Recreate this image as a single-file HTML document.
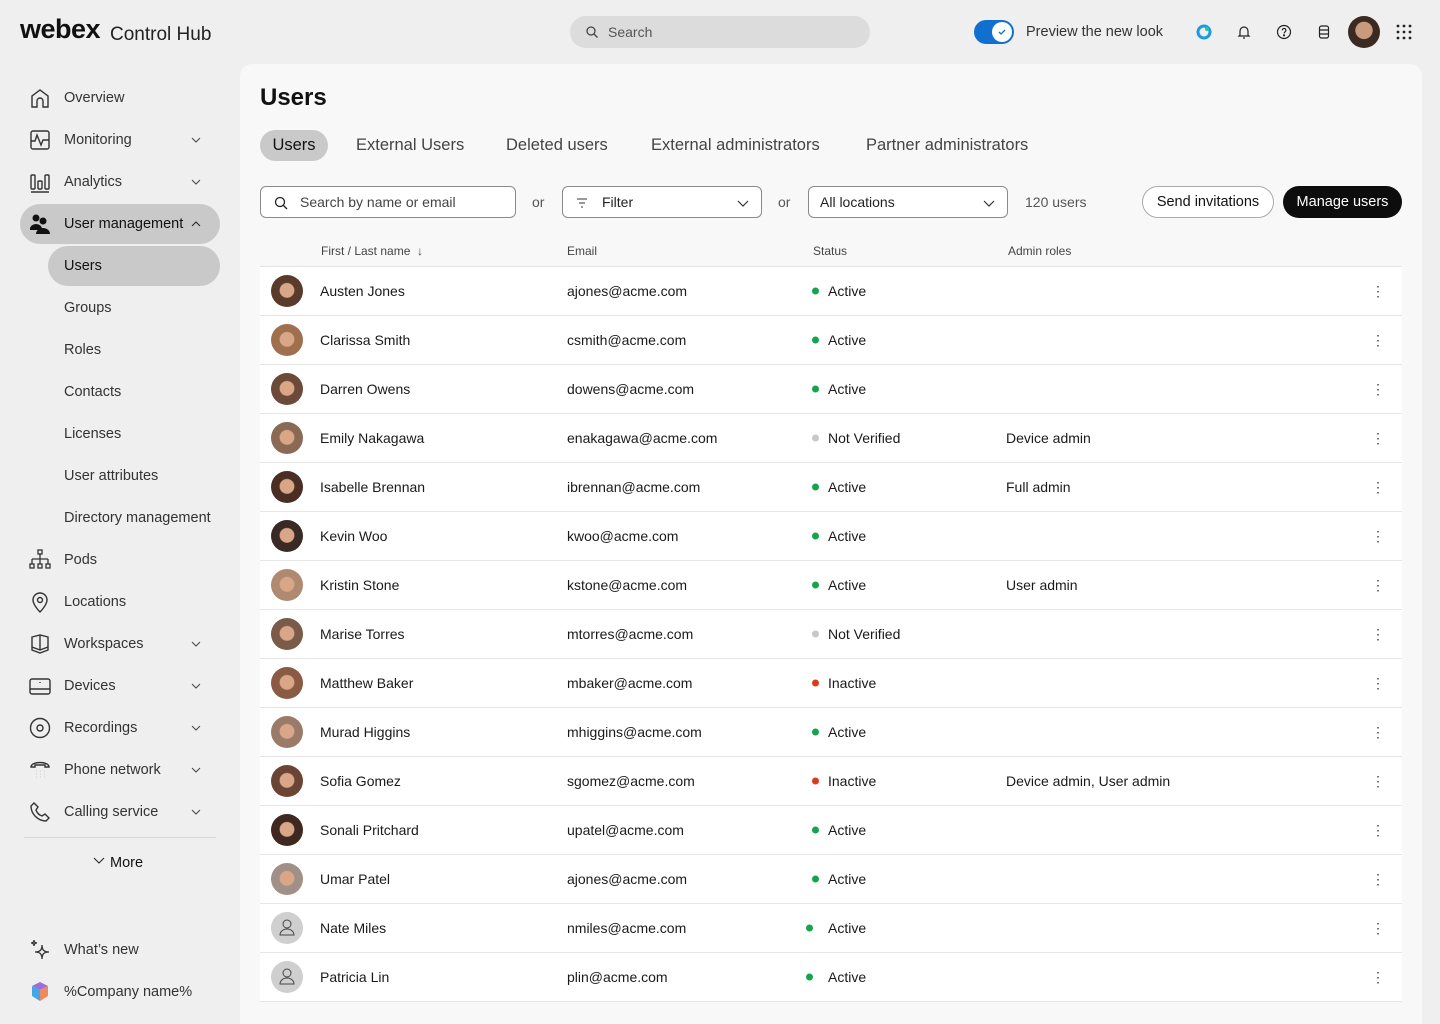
<!DOCTYPE html>
<html><head><meta charset="utf-8"><style>
*{box-sizing:border-box;margin:0;padding:0}
body{width:1440px;height:1024px;overflow:hidden;background:#efefef;font-family:"Liberation Sans",Arial,sans-serif;color:#1a1a1a;position:relative}
.abs{position:absolute}
.nav{position:absolute;left:20px;width:200px;height:40px;border-radius:20px;display:flex;align-items:center;font-size:14.5px;color:#333}
.nav svg{position:absolute;left:9px;top:9px}
.nav span{position:absolute;left:44px}
.nav .ch{position:absolute;left:170px;top:14px}
.sub{position:absolute;left:48px;width:172px;height:40px;border-radius:20px;font-size:14.5px;color:#333;display:flex;align-items:center;padding-left:16px}
.main{position:absolute;left:240px;top:64px;width:1182px;height:960px;background:#f8f8f8;border-radius:12px 12px 0 0}
.row{position:absolute;left:260px;width:1142px;height:49px;background:#fff;border-bottom:1px solid #e6e6e6;font-size:14px}
.row>*{position:absolute;top:50%;transform:translateY(-50%)}
.av{left:11px;width:32px;height:32px;border-radius:50%}
.dot{width:7px;height:7px;border-radius:50%}
.keb{left:1111px;font-size:14px;color:#444;letter-spacing:0;line-height:1}
.tab{position:absolute;top:130px;height:31px;font-size:16.5px;color:#444;display:flex;align-items:center}
.box{position:absolute;top:186px;height:32px;border:1px solid #8a8a8a;border-radius:6px;background:#fff;font-size:14px;display:flex;align-items:center}
</style></head><body>
<div class="abs" style="left:20px;top:14px;font-size:27px;font-weight:bold;letter-spacing:-0.5px;color:#111">webex</div>
<div class="abs" style="left:110px;top:24px;font-size:19px;color:#222">Control Hub</div>

<div class="abs" style="left:570px;top:16px;width:300px;height:32px;border-radius:16px;background:#dcdcdc;font-size:14px;color:#555;display:flex;align-items:center;padding-left:38px">Search
<svg class="abs" style="left:16px;top:10px" width="12" height="12" viewBox="0 0 12 12" fill="none" stroke="#444" stroke-width="1.3"><circle cx="5" cy="5" r="4"/><path d="M8 8l3.5 3.5"/></svg></div>

<div class="abs" style="left:974px;top:20px;width:40px;height:24px;border-radius:12px;background:#1170cf"><div class="abs" style="left:18px;top:2px;width:20px;height:20px;border-radius:50%;background:#fff"><svg width="20" height="20" viewBox="0 0 20 20" fill="none" stroke="#1170cf" stroke-width="1.3"><path d="M7 10l2 2 4-4"/></svg></div></div>
<div class="abs" style="left:1026px;top:24px;font-size:14.5px;color:#333">Preview the new look</div>
<svg class="abs" style="left:1196px;top:24px" width="16" height="16" viewBox="0 0 16 16"><circle cx="8" cy="8" r="6" fill="none" stroke="#1a9ae0" stroke-width="3"/><circle cx="11" cy="5" r="2" fill="#2ec4a0"/></svg>
<svg class="abs" style="left:1236px;top:24px" width="16" height="16" viewBox="0 0 16 16" fill="none" stroke="#222" stroke-width="1.2"><path d="M4 11V7a4 4 0 018 0v4l1 1H3z M7 14h2"/></svg>
<svg class="abs" style="left:1276px;top:24px" width="16" height="16" viewBox="0 0 16 16" fill="none" stroke="#222" stroke-width="1.2"><circle cx="8" cy="8" r="6.5"/><path d="M6.3 6.3a1.8 1.8 0 113 1.3c-.8.5-1.3.9-1.3 1.8"/><circle cx="8" cy="11.3" r=".5" fill="#222"/></svg>
<svg class="abs" style="left:1316px;top:24px" width="16" height="16" viewBox="0 0 16 16" fill="none" stroke="#222" stroke-width="1.2"><rect x="3.5" y="2" width="9" height="12" rx="2"/><path d="M3.5 6h9M3.5 10h9"/></svg>
<div class="abs" style="left:1348px;top:16px;width:32px;height:32px;border-radius:50%;background:radial-gradient(circle at 50% 45%,#c99a7e 0 35%,#3a2a22 38%)"></div>
<svg class="abs" style="left:1396px;top:24px" width="16" height="16" viewBox="0 0 16 16" fill="#222"><circle cx="2" cy="2" r="1.4"/><circle cx="8" cy="2" r="1.4"/><circle cx="14" cy="2" r="1.4"/><circle cx="2" cy="8" r="1.4"/><circle cx="8" cy="8" r="1.4"/><circle cx="14" cy="8" r="1.4"/><circle cx="2" cy="14" r="1.4"/><circle cx="8" cy="14" r="1.4"/><circle cx="14" cy="14" r="1.4"/></svg>

<!-- sidebar -->
<div class="nav" style="top:78px"><svg width="22" height="22" viewBox="0 0 22 22" fill="none" stroke="#333" stroke-width="1.4"><path d="M3 20V9l8-6 8 6v11h-5v-6a3 3 0 00-6 0v6z"/></svg><span>Overview</span></div>
<div class="nav" style="top:120px"><svg width="22" height="22" viewBox="0 0 22 22" fill="none" stroke="#333" stroke-width="1.4"><rect x="2" y="2" width="18" height="18" rx="2"/><path d="M2 12h4l2-6 4 10 2-5h6"/></svg><span>Monitoring</span><svg class="ch" width="12" height="12" viewBox="0 0 12 12" fill="none" stroke="#444"><path d="M2 4l4 4 4-4"/></svg></div>
<div class="nav" style="top:162px"><svg width="22" height="22" viewBox="0 0 22 22" fill="none" stroke="#333" stroke-width="1.4"><rect x="2" y="4" width="4" height="14" rx="1"/><rect x="9" y="10" width="4" height="8" rx="1"/><rect x="16" y="4" width="4" height="14" rx="1"/><path d="M2 21h18"/></svg><span>Analytics</span><svg class="ch" width="12" height="12" viewBox="0 0 12 12" fill="none" stroke="#444"><path d="M2 4l4 4 4-4"/></svg></div>
<div class="nav" style="top:204px;background:#c9c9c9;color:#111"><svg width="22" height="22" viewBox="0 0 22 22" fill="#111"><circle cx="7" cy="5" r="3.5"/><circle cx="14" cy="8" r="3.5"/><path d="M1 16a6 5 0 0112 0v1H1z"/><path d="M7 21a7 6 0 0114 0z"/></svg><span>User management</span><svg class="ch" width="12" height="12" viewBox="0 0 12 12" fill="none" stroke="#222"><path d="M2 8l4-4 4 4"/></svg></div>
<div class="sub" style="top:246px;background:#c9c9c9;color:#111">Users</div>
<div class="sub" style="top:288px">Groups</div>
<div class="sub" style="top:330px">Roles</div>
<div class="sub" style="top:372px">Contacts</div>
<div class="sub" style="top:414px">Licenses</div>
<div class="sub" style="top:456px">User attributes</div>
<div class="sub" style="top:498px">Directory management</div>
<div class="nav" style="top:540px"><svg width="22" height="22" viewBox="0 0 22 22" fill="none" stroke="#333" stroke-width="1.3"><rect x="9" y="1" width="4" height="4"/><path d="M11 5v5M3 10h16M3 10v5M11 10v5M19 10v5"/><rect x="1" y="15" width="4" height="4"/><rect x="9" y="15" width="4" height="4"/><rect x="17" y="15" width="4" height="4"/></svg><span>Pods</span></div>
<div class="nav" style="top:582px"><svg width="22" height="22" viewBox="0 0 22 22" fill="none" stroke="#333" stroke-width="1.4"><path d="M11 21s-7-7-7-12a7 7 0 0114 0c0 5-7 12-7 12z"/><circle cx="11" cy="9" r="2.5"/></svg><span>Locations</span></div>
<div class="nav" style="top:624px"><svg width="22" height="22" viewBox="0 0 22 22" fill="none" stroke="#333" stroke-width="1.4"><path d="M3 4l8-2 8 2v13l-8 3-8-3z M3 14l8 3 8-3M11 2v15"/></svg><span>Workspaces</span><svg class="ch" width="12" height="12" viewBox="0 0 12 12" fill="none" stroke="#444"><path d="M2 4l4 4 4-4"/></svg></div>
<div class="nav" style="top:666px"><svg width="22" height="22" viewBox="0 0 22 22" fill="none" stroke="#333" stroke-width="1.4"><rect x="1" y="4" width="20" height="15" rx="2"/><path d="M1 14h20M11 7v1"/></svg><span>Devices</span><svg class="ch" width="12" height="12" viewBox="0 0 12 12" fill="none" stroke="#444"><path d="M2 4l4 4 4-4"/></svg></div>
<div class="nav" style="top:708px"><svg width="22" height="22" viewBox="0 0 22 22" fill="none" stroke="#333" stroke-width="1.4"><circle cx="11" cy="11" r="9.5"/><circle cx="11" cy="11" r="3"/></svg><span>Recordings</span><svg class="ch" width="12" height="12" viewBox="0 0 12 12" fill="none" stroke="#444"><path d="M2 4l4 4 4-4"/></svg></div>
<div class="nav" style="top:750px"><svg width="22" height="22" viewBox="0 0 22 22" fill="none" stroke="#333" stroke-width="1.4"><path d="M2 8c0-6 18-6 18 0h-4v-2H6v2z"/><path d="M7 12h.1M11 12h.1M15 12h.1M7 15h.1M11 15h.1M15 15h.1M7 18h.1M11 18h.1M15 18h.1" stroke-width="1.8"/></svg><span>Phone network</span><svg class="ch" width="12" height="12" viewBox="0 0 12 12" fill="none" stroke="#444"><path d="M2 4l4 4 4-4"/></svg></div>
<div class="nav" style="top:792px"><svg width="22" height="22" viewBox="0 0 22 22" fill="none" stroke="#333" stroke-width="1.4"><path d="M5 2l4 4-2 3c1 3 3 5 6 6l3-2 4 4-3 3C9 20 2 13 2 5z"/></svg><span>Calling service</span><svg class="ch" width="12" height="12" viewBox="0 0 12 12" fill="none" stroke="#444"><path d="M2 4l4 4 4-4"/></svg></div>
<div class="abs" style="left:24px;top:837px;width:192px;height:1px;background:#d8d8d8"></div>
<div class="abs" style="left:92px;top:855px;font-size:14.5px;color:#111"><svg width="14" height="12" viewBox="0 0 14 12" fill="none" stroke="#222"><path d="M2 3l5 5 5-5"/></svg> More</div>
<div class="nav" style="top:930px"><svg width="22" height="22" viewBox="0 0 22 22" fill="none" stroke="#333" stroke-width="1.3"><path d="M13 6c0 5 2 7 7 7-5 0-7 2-7 7 0-5-2-7-7-7 5 0 7-2 7-7z M5 1c0 2 1 3 3 3-2 0-3 1-3 3 0-2-1-3-3-3 2 0 3-1 3-3z"/></svg><span>What’s new</span></div>
<div class="nav" style="top:972px"><svg width="22" height="22" viewBox="0 0 22 22"><path d="M3 5l8-4 8 4-8 4z" fill="#9b6fd6"/><path d="M3 5v10l8 5V9z" fill="#3fa8e8"/><path d="M19 5v10l-8 5V9z" fill="#f08a5d"/></svg><span>%Company name%</span></div>

<div class="main"></div>
<div class="abs" style="left:260px;top:84px;font-size:24px;font-weight:bold;color:#111">Users</div>
<div class="tab" style="left:260px;width:68px;background:#c9c9c9;border-radius:16px;justify-content:center;color:#111">Users</div>
<div class="tab" style="left:356px">External Users</div>
<div class="tab" style="left:506px">Deleted users</div>
<div class="tab" style="left:651px">External administrators</div>
<div class="tab" style="left:866px">Partner administrators</div>

<div class="box" style="left:260px;width:256px;padding-left:39px;color:#444">Search by name or email<svg class="abs" style="left:13px;top:9px" width="14" height="14" viewBox="0 0 14 14" fill="none" stroke="#222" stroke-width="1.3"><circle cx="6" cy="6" r="4.5"/><path d="M9.5 9.5L13 13"/></svg></div>
<div class="abs" style="left:532px;top:194px;font-size:14px;color:#555">or</div>
<div class="box" style="left:562px;width:200px;padding-left:39px;color:#222">Filter<svg class="abs" style="left:13px;top:10px" width="12" height="12" viewBox="0 0 12 12" fill="none" stroke="#333"><path d="M1 2h10M3 6h6M5 10h2"/></svg><svg class="abs" style="left:173px;top:9px" width="14" height="14" viewBox="0 0 14 14" fill="none" stroke="#333" stroke-width="1.2"><path d="M2 5l5 5 5-5"/></svg></div>
<div class="abs" style="left:778px;top:194px;font-size:14px;color:#555">or</div>
<div class="box" style="left:808px;width:200px;padding-left:11px;color:#222">All locations<svg class="abs" style="left:173px;top:9px" width="14" height="14" viewBox="0 0 14 14" fill="none" stroke="#333" stroke-width="1.2"><path d="M2 5l5 5 5-5"/></svg></div>
<div class="abs" style="left:1025px;top:194px;font-size:14px;color:#555">120 users</div>
<div class="abs" style="left:1142px;top:186px;width:132px;height:32px;border:1px solid #aaa;border-radius:16px;font-size:14.5px;display:flex;align-items:center;justify-content:center;color:#111;background:#fff">Send invitations</div>
<div class="abs" style="left:1283px;top:186px;width:119px;height:32px;border-radius:16px;background:#0d0d0d;font-size:14.5px;display:flex;align-items:center;justify-content:center;color:#fff">Manage users</div>

<div class="abs" style="left:321px;top:244px;font-size:12px;color:#444">First / Last name &nbsp;↓</div>
<div class="abs" style="left:567px;top:244px;font-size:12px;color:#444">Email</div>
<div class="abs" style="left:813px;top:244px;font-size:12px;color:#444">Status</div>
<div class="abs" style="left:1008px;top:244px;font-size:12px;color:#444">Admin roles</div>
<div class="abs" style="left:260px;top:266px;width:1142px;height:1px;background:#e3e3e3"></div>

<div id="rows"></div>
<script>
const d=[["Austen Jones","ajones@acme.com","Active","","#5a3a2a"],["Clarissa Smith","csmith@acme.com","Active","","#a0704e"],["Darren Owens","dowens@acme.com","Active","","#6b4a3a"],["Emily Nakagawa","enakagawa@acme.com","Not Verified","Device admin","#8a6a55"],["Isabelle Brennan","ibrennan@acme.com","Active","Full admin","#4a2e24"],["Kevin Woo","kwoo@acme.com","Active","","#3a2a25"],["Kristin Stone","kstone@acme.com","Active","User admin","#b08a70"],["Marise Torres","mtorres@acme.com","Not Verified","","#7a5a48"],["Matthew Baker","mbaker@acme.com","Inactive","","#8a5a44"],["Murad Higgins","mhiggins@acme.com","Active","","#9a7a68"],["Sofia Gomez","sgomez@acme.com","Inactive","Device admin, User admin","#6a4535"],["Sonali Pritchard","upatel@acme.com","Active","","#3e2820"],["Umar Patel","ajones@acme.com","Active","","#a09088"],["Nate Miles","nmiles@acme.com","Active","",""],["Patricia Lin","plin@acme.com","Active","",""]];
let h="";d.forEach((r,i)=>{const c=r[2]=="Active"?"#14a44d":r[2]=="Inactive"?"#db3a20":"#c8c8c8";const dx=i>=13?546:552;
const av=r[4]?`<div class="av" style="background:radial-gradient(circle at 50% 48%,#d9a787 0 30%,${r[4]} 34%)"></div>`:`<div class="av" style="background:#cfcfcf"><svg width="32" height="32" viewBox="0 0 32 32" fill="none" stroke="#444" stroke-width="1"><circle cx="16" cy="12" r="4"/><path d="M9 23a7 6 0 0114 0z"/></svg></div>`;
h+=`<div class="row" style="top:${267+i*49}px">${av}<div style="left:60px">${r[0]}</div><div style="left:307px">${r[1]}</div><div class="dot" style="left:${dx}px;background:${c}"></div><div style="left:568px">${r[2]}</div><div style="left:746px">${r[3]}</div><div class="keb">⋮</div></div>`});
document.getElementById("rows").innerHTML=h;
</script>
</body></html>
